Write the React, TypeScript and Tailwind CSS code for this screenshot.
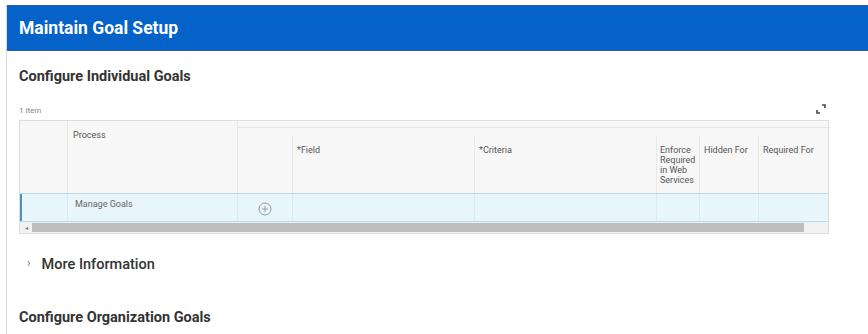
import React from 'react';

const cols = '48px 170px 55px 182px 182px 43px 59px 71px';

function ExpandIcon() {
  return (
    <svg width="10" height="10" viewBox="0 0 10 10" fill="none" stroke="#444" strokeWidth="1.6">
      <path d="M6 1h3v3" />
      <path d="M4 9H1V6" />
    </svg>
  );
}

function PlusCircle() {
  return (
    <svg width="14" height="14" viewBox="0 0 14 14" fill="none" stroke="#9a9a9a" strokeWidth="1">
      <circle cx="7" cy="7" r="6" />
      <path d="M7 4v6M4 7h6" />
    </svg>
  );
}

export default function App() {
  return (
    <div className="w-[868px] h-[334px] overflow-hidden bg-white pt-[5px] font-['Roboto',sans-serif]">
      <div className="ml-[6px] h-full border-l border-[#d9d9d9]">
        <div className="h-[46px] bg-[#0562c8] border-y border-[#2f5f9a] pl-[12px] flex items-center">
          <h1 className="text-[17.5px] font-bold text-white">Maintain Goal Setup</h1>
        </div>

        <div className="pl-[12px]">
          <h2 className="mt-[16px] h-[20px] leading-[20px] text-[14.5px] font-bold text-[#333]">
            Configure Individual Goals
          </h2>

          <div className="mt-[13px] w-[810px] flex items-end justify-between h-[16px]">
            <span className="text-[8px] text-[#888] leading-[10px]">1 item</span>
            <span className="mr-[3px] mb-[2px]"><ExpandIcon /></span>
          </div>

          <div className="mt-[4px] w-[810px] border border-[#dedede]">
            {/* header */}
            <div className="grid bg-[#f7f7f7]" style={{ gridTemplateColumns: cols }}>
              <div className="row-span-2 h-[72px] border-r border-[#e8e8e8]" />
              <div className="row-span-2 border-r border-[#e8e8e8] pl-[5px] pt-[9px] text-[9px] text-[#555] leading-[10px]">
                Process
              </div>
              <div className="col-span-6 h-[7px] border-b border-[#e6e6e6]" />
              {['', '*Field', '*Criteria'].map((t, i) => (
                <div key={i} className="border-r border-[#e8e8e8] pl-[4px] pt-[9px] text-[9px] text-[#555] leading-[10px]">
                  {t}
                </div>
              ))}
              <div className="border-r border-[#e8e8e8] pl-[3px] pt-[9px] text-[9px] text-[#555] leading-[10px]">
                Enforce<br />Required<br />in Web<br />Services
              </div>
              <div className="border-r border-[#e8e8e8] pl-[4px] pt-[9px] text-[9px] text-[#555] leading-[10px]">
                Hidden For
              </div>
              <div className="pl-[4px] pt-[9px] text-[9px] text-[#555] leading-[10px]">Required For</div>
            </div>

            {/* data row */}
            <div
              className="grid h-[29px] bg-[#e8f6fb] border-y border-[#b7dbe8]"
              style={{ gridTemplateColumns: cols }}
            >
              <div className="border-l-2 border-[#4d8fbf] border-r border-r-[#d9ebf2]" />
              <div className="border-r border-[#d9ebf2] pl-[7px] pt-[4px] text-[9px] text-[#666] leading-[12px]">
                Manage Goals
              </div>
              <div className="border-r border-[#d9ebf2] flex items-center justify-center pt-[2px]">
                <PlusCircle />
              </div>
              <div className="border-r border-[#d9ebf2]" />
              <div className="border-r border-[#d9ebf2]" />
              <div className="border-r border-[#d9ebf2]" />
              <div className="border-r border-[#d9ebf2]" />
              <div />
            </div>

            {/* scrollbar */}
            <div className="h-[11px] bg-[#f1f1f1] flex items-center">
              <span className="w-[12px] text-center text-[6px] text-[#777] leading-none">◂</span>
              <div className="h-[9px] w-[772px] bg-[#bdbdbd]" />
            </div>
          </div>

          <div className="mt-[21px] flex items-center h-[20px]">
            <span className="ml-[8px] mb-[4px] text-[12px] text-[#777] leading-none">›</span>
            <span className="ml-[11px] text-[14.5px] font-medium text-[#333]">More Information</span>
          </div>

          <h2 className="mt-[33px] h-[20px] leading-[20px] text-[14.5px] font-bold text-[#333]">
            Configure Organization Goals
          </h2>
        </div>
      </div>
    </div>
  );
}
